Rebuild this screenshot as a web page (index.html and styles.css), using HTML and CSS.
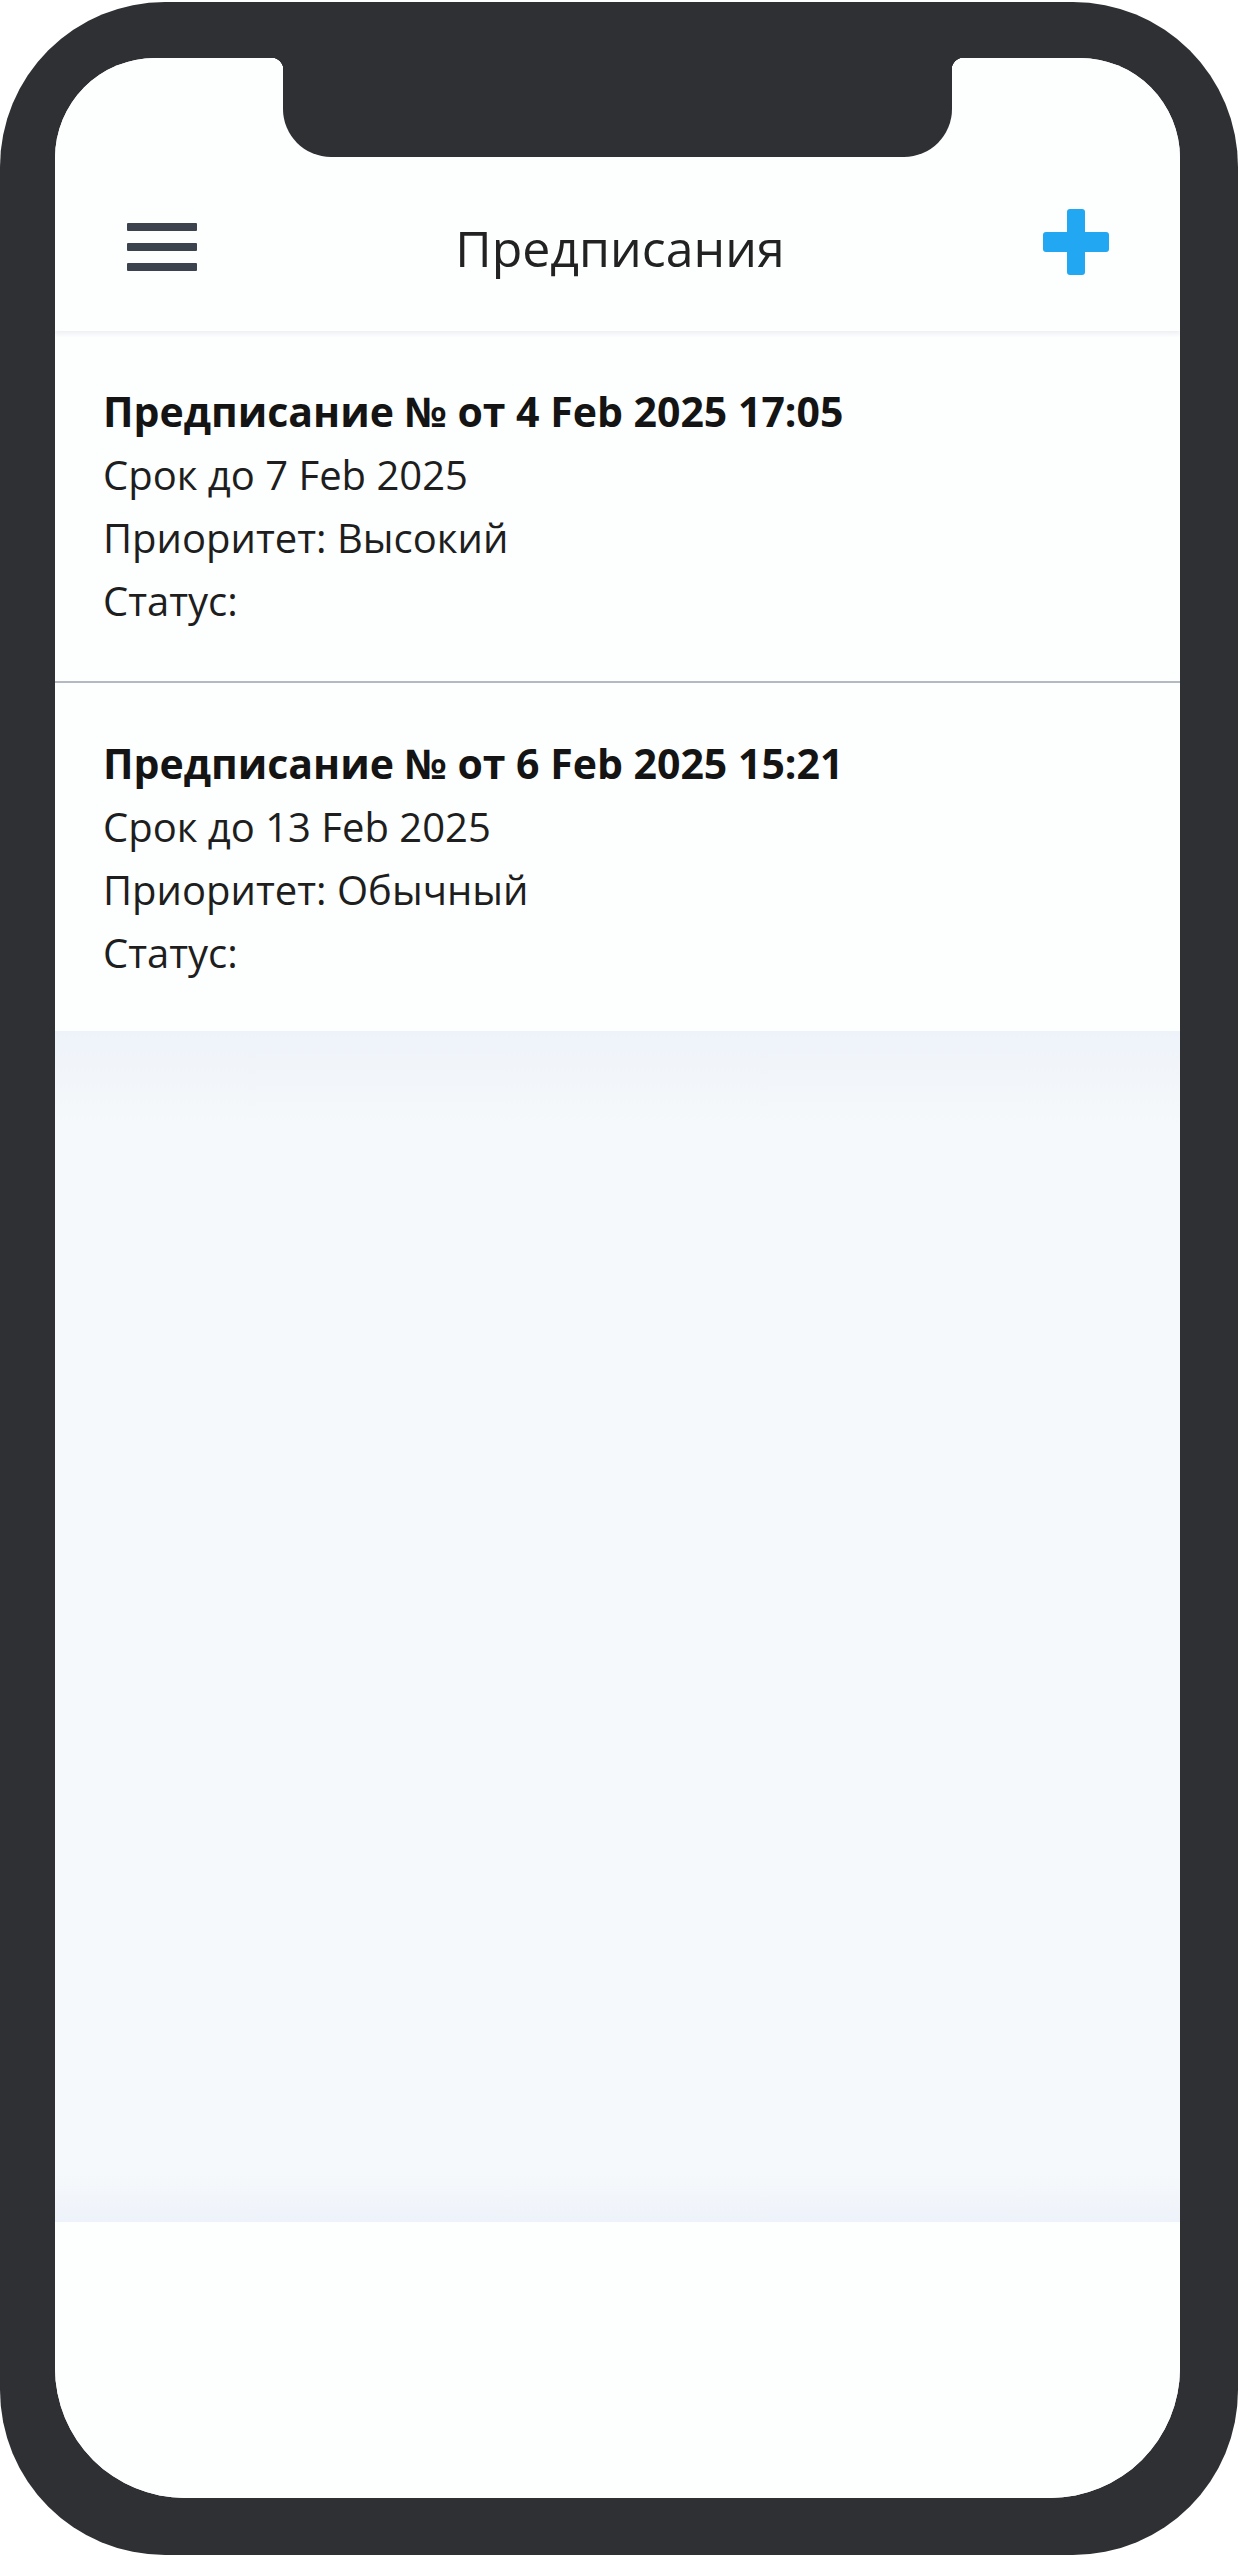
FILE: index.html
```html
<!DOCTYPE html>
<html lang="ru">
<head>
  <meta charset="UTF-8">
  <meta name="viewport" content="width=device-width, initial-scale=1.0">
  <title>Предписания</title>
  <link rel="stylesheet" href="styles.css">
</head>
<body>

  <div class="phone">
    <div class="screen">
      <div class="notch"></div>

      <header class="app-header">
        <div class="app-bar">
          <button class="menu-btn" aria-label="Меню">
            <span></span>
            <span></span>
            <span></span>
          </button>
          <h1 class="app-title">Предписания</h1>
          <button class="add-btn" aria-label="Добавить">
            <svg width="66" height="66" viewBox="0 0 66 66">
              <rect x="24" y="0" width="18" height="66" rx="3" fill="#22a7f2"/>
              <rect x="0" y="23" width="66" height="20" rx="3" fill="#22a7f2"/>
            </svg>
          </button>
        </div>
      </header>

      <ul class="order-list">
        <li class="order">
          <div class="order-title">Предписание № от 4 Feb 2025 17:05</div>
          <div>Срок до 7 Feb 2025</div>
          <div>Приоритет: Высокий</div>
          <div>Статус:</div>
        </li>
        <li class="order">
          <div class="order-title">Предписание № от 6 Feb 2025 15:21</div>
          <div>Срок до 13 Feb 2025</div>
          <div>Приоритет: Обычный</div>
          <div>Статус:</div>
        </li>
      </ul>

      <div class="empty-area"></div>
      <div class="screen-bottom"></div>
    </div>
  </div>

</body>
</html>
```

FILE: styles.css
```css
body {
  margin: 0;
  padding: 0;
  background-color: #fff;
  font-family: "Open Sans", "Noto Sans", sans-serif;
}

.phone {
  width: 1238px;
  height: 2553px;
  margin-top: 2px;
  box-sizing: border-box;
  padding: 56px 58px 57px 55px;
  background-color: #2f3033;
  border-radius: 165px;
}

.screen {
  position: relative;
  height: 100%;
  display: flex;
  flex-direction: column;
  background-color: #fdfefe;
  border-radius: 100px 100px 130px 130px;
  overflow: hidden;
}

.notch {
  position: absolute;
  z-index: 5;
  top: 0;
  left: 228px;
  width: 669px;
  height: 99px;
  background-color: #2f3033;
  border-radius: 0 0 48px 48px;
}

.notch::before,
.notch::after {
  content: "";
  position: absolute;
  top: 0;
  width: 12px;
  height: 12px;
}

.notch::before {
  left: -12px;
  background: radial-gradient(circle at 0 100%, transparent 12px, #2f3033 12.5px);
}

.notch::after {
  right: -12px;
  background: radial-gradient(circle at 100% 100%, transparent 12px, #2f3033 12.5px);
}

.app-header {
  position: relative;
  z-index: 1;
  height: 273px;
  box-sizing: border-box;
  padding-top: 99px;
  background-color: #fdfefe;
  box-shadow: 0 3px 4px rgba(40, 60, 110, 0.07);
}

.app-bar {
  height: 174px;
  padding: 0 71px 0 72px;
  display: flex;
  align-items: center;
  justify-content: space-between;
}

.menu-btn {
  width: 70px;
  padding: 0;
  border: none;
  background: none;
  display: flex;
  flex-direction: column;
  gap: 12px;
  margin-top: 6px;
}

.menu-btn span {
  display: block;
  height: 8px;
  background-color: #3b434e;
  border-radius: 1px;
}

.app-title {
  margin: 8px 0 0;
  font-size: 50px;
  font-weight: 400;
  color: #222;
}

.add-btn {
  padding: 0;
  border: none;
  background: none;
  display: flex;
  margin-top: -4px;
}

.order-list {
  list-style: none;
  margin: 0;
  padding: 0;
}

.order {
  padding: 49px 48px;
  height: 350px;
  box-sizing: border-box;
  font-size: 40px;
  line-height: 63px;
  color: #1e1e1e;
}

.order + .order {
  border-top: 2px solid #b4b9c2;
}

.order-title {
  font-size: 41px;
  font-weight: 700;
  color: #141414;
}

.empty-area {
  height: 1191px;
  background: linear-gradient(to bottom, #eef3fa 0%, #f2f6fa 4%, #f5f9fb 8%, #f6f9fb 96%, #eef2fa 100%);
}

.screen-bottom {
  flex: 1;
  background-color: #fdfefe;
}
```
